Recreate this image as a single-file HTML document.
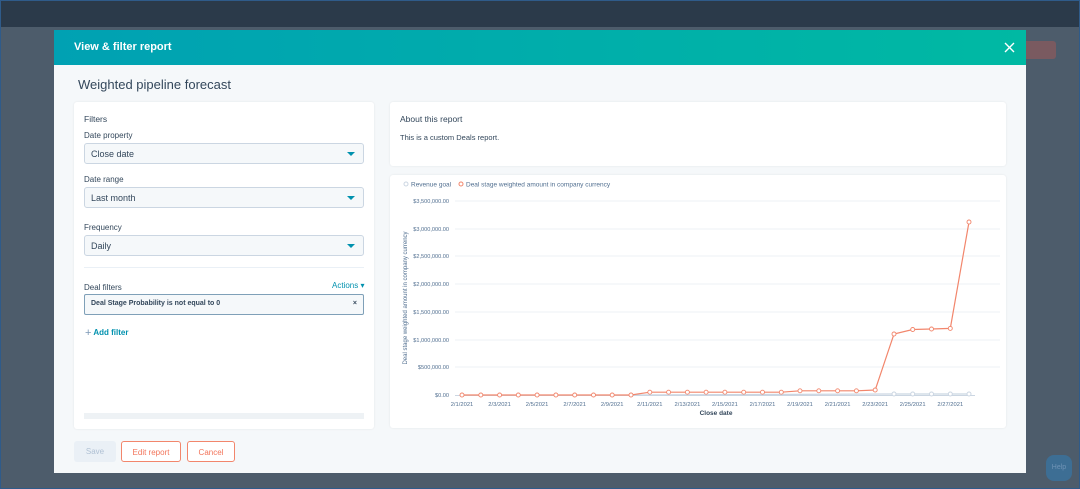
<!DOCTYPE html>
<html><head><meta charset="utf-8"><style>
*{box-sizing:border-box;margin:0;padding:0}
body{width:1080px;height:489px;overflow:hidden;background:#4d5c6b;font-family:"Liberation Sans",sans-serif;position:relative}
.nav{position:absolute;left:0;top:0;width:1080px;height:27px;background:#2b3a4a}
.a{position:absolute}
.modal{left:54px;top:30px;width:972px;height:443px;background:#f5f8fa}
.hdr{left:54px;top:30px;width:972px;height:35px;background:linear-gradient(90deg,#00a1b3,#00b9a3)}
.card{background:#fff;border-radius:3px;box-shadow:0 0 2px rgba(0,0,0,.08)}
.lbl{font-size:8px;color:#33475b}
.dd{position:absolute;left:84px;width:280px;height:21px;background:#f5f8fa;border:1px solid #cbd6e2;border-radius:3px;font-size:9px;color:#33475b;padding:5px 0 0 6px}
.dd:after{content:"";position:absolute;right:8px;top:8px;border:4px solid transparent;border-top:4px solid #0091ae;border-bottom:0}
.btn{position:absolute;top:441px;height:21px;border-radius:3px;font-size:8px;text-align:center;padding-top:6px}
</style></head><body>
<div class="a" style="left:0;top:0;width:1080px;height:489px;border:1px solid #2f5b8a;z-index:5"></div>
<div class="a nav"></div>
<div class="a" style="left:990px;top:41px;width:66px;height:18px;background:#7a5a60;border-radius:3px"></div>
<div class="a" style="left:1046px;top:455px;width:26px;height:26px;background:#3d6e94;border-radius:8px;color:#6f93b5;font-size:7px;text-align:center;padding-top:9px">Help</div>
<div class="a modal"></div>
<div class="a hdr"></div>
<div class="a" style="left:74px;top:41px;color:#fff;font-size:11px;font-weight:bold">View &amp; filter report</div>
<svg class="a" style="left:1004px;top:42px" width="11" height="11"><path d="M1 1L10 10M10 1L1 10" stroke="#fff" stroke-width="1.4"/></svg>
<div class="a" style="left:78px;top:77px;color:#33475b;font-size:13px">Weighted pipeline forecast</div>

<div class="a card" style="left:74px;top:102px;width:300px;height:327px"></div>
<div class="a lbl" style="left:84px;top:114px;font-size:8.5px">Filters</div>
<div class="a lbl" style="left:84px;top:131px">Date property</div>
<div class="dd" style="top:143px">Close date</div>
<div class="a lbl" style="left:84px;top:175px">Date range</div>
<div class="dd" style="top:187px">Last month</div>
<div class="a lbl" style="left:84px;top:223px">Frequency</div>
<div class="dd" style="top:235px">Daily</div>
<div class="a" style="left:84px;top:267px;width:280px;height:1px;background:#eaf0f6"></div>
<div class="a lbl" style="left:84px;top:283px">Deal filters</div>
<div class="a" style="left:332px;top:281px;font-size:8px;color:#0091ae">Actions ▾</div>
<div class="a" style="left:84px;top:294px;width:280px;height:21px;background:#f5f8fa;border:1px solid #7fa0b8;border-radius:2px;font-size:7px;font-weight:bold;color:#33475b;padding:5px 0 0 6px">Deal Stage Probability is not equal to 0<span style="position:absolute;right:6px;top:5px">×</span></div>
<div class="a" style="left:85px;top:327px;font-size:8px;color:#0091ae;font-weight:bold"><span style="color:#7c98b6;font-weight:normal;font-size:11px;vertical-align:-1px">+</span> Add filter</div>
<div class="a" style="left:84px;top:413px;width:280px;height:6px;background:#eef2f5"></div>

<div class="a card" style="left:390px;top:102px;width:616px;height:64px"></div>
<div class="a lbl" style="left:400px;top:114px;font-size:8.5px">About this report</div>
<div class="a" style="left:400px;top:133px;font-size:7.5px;color:#33475b">This is a custom Deals report.</div>

<div class="a card" style="left:390px;top:175px;width:616px;height:253px"></div>
<svg class="a" style="left:0;top:0" width="1080" height="489" font-family="Liberation Sans, sans-serif">
<g font-size="6.5" fill="#516f90">
<circle cx="406" cy="184" r="2" fill="none" stroke="#cbd6e2"/><text x="411" y="186.5">Revenue goal</text>
<circle cx="461" cy="184" r="2" fill="none" stroke="#f2866c"/><text x="466" y="186.5">Deal stage weighted amount in company currency</text>
</g>
<g stroke="#eef2f6" stroke-width="1">
<line x1="455" x2="1000" y1="201" y2="201"/><line x1="455" x2="1000" y1="229" y2="229"/><line x1="455" x2="1000" y1="256" y2="256"/><line x1="455" x2="1000" y1="284" y2="284"/><line x1="455" x2="1000" y1="312" y2="312"/><line x1="455" x2="1000" y1="340" y2="340"/><line x1="455" x2="1000" y1="367" y2="367"/>
</g>
<line x1="455" x2="975" y1="395.5" y2="395.5" stroke="#cbd6e2"/>
<g font-size="5.6" fill="#516f90" text-anchor="end">
<text x="449" y="203">$3,500,000.00</text><text x="449" y="231">$3,000,000.00</text><text x="449" y="258">$2,500,000.00</text><text x="449" y="286">$2,000,000.00</text><text x="449" y="314">$1,500,000.00</text><text x="449" y="342">$1,000,000.00</text><text x="449" y="369">$500,000.00</text><text x="449" y="397">$0.00</text>
</g>
<text transform="translate(407,298) rotate(-90)" font-size="6" fill="#516f90" text-anchor="middle">Deal stage weighted amount in company currency</text>
<g font-size="5.8" fill="#516f90" text-anchor="middle">
<text x="462" y="406">2/1/2021</text><text x="499.6" y="406">2/3/2021</text><text x="537.1" y="406">2/5/2021</text><text x="574.7" y="406">2/7/2021</text><text x="612.2" y="406">2/9/2021</text><text x="649.8" y="406">2/11/2021</text><text x="687.4" y="406">2/13/2021</text><text x="724.9" y="406">2/15/2021</text><text x="762.5" y="406">2/17/2021</text><text x="800" y="406">2/19/2021</text><text x="837.6" y="406">2/21/2021</text><text x="875.2" y="406">2/23/2021</text><text x="912.7" y="406">2/25/2021</text><text x="950.3" y="406">2/27/2021</text>
</g>
<text x="716" y="415" font-size="6.5" font-weight="bold" fill="#33475b" text-anchor="middle">Close date</text>
<polyline fill="none" stroke="#cbd6e2" stroke-width="1.2" points="631,395 894,394 969,394"/>
<g fill="#fff" stroke="#cbd6e2"><circle cx="894" cy="394" r="2"/><circle cx="912.7" cy="394" r="2"/><circle cx="931.5" cy="394" r="2"/><circle cx="950.3" cy="394" r="2"/><circle cx="969" cy="394" r="2"/></g>
<polyline fill="none" stroke="#f2866c" stroke-width="1.2" points="462,395 480.8,395 499.6,395 518.3,395 537.1,395 555.9,395 574.7,395 593.5,395 612.2,395 631,395 649.8,392.2 668.6,392.2 687.4,392.2 706.1,392.2 724.9,392.2 743.7,392.2 762.5,392.2 781.3,392.2 800,390.8 818.8,390.8 837.6,390.8 856.4,390.8 875.2,390 894,334 912.7,329.5 931.5,329 950.3,328.4 969,222"/>
<g fill="#fff" stroke="#f2866c" stroke-width="0.9">
<circle cx="462" cy="395" r="2"/><circle cx="480.8" cy="395" r="2"/><circle cx="499.6" cy="395" r="2"/><circle cx="518.3" cy="395" r="2"/><circle cx="537.1" cy="395" r="2"/><circle cx="555.9" cy="395" r="2"/><circle cx="574.7" cy="395" r="2"/><circle cx="593.5" cy="395" r="2"/><circle cx="612.2" cy="395" r="2"/><circle cx="631" cy="395" r="2"/><circle cx="649.8" cy="392.2" r="2"/><circle cx="668.6" cy="392.2" r="2"/><circle cx="687.4" cy="392.2" r="2"/><circle cx="706.1" cy="392.2" r="2"/><circle cx="724.9" cy="392.2" r="2"/><circle cx="743.7" cy="392.2" r="2"/><circle cx="762.5" cy="392.2" r="2"/><circle cx="781.3" cy="392.2" r="2"/><circle cx="800" cy="390.8" r="2"/><circle cx="818.8" cy="390.8" r="2"/><circle cx="837.6" cy="390.8" r="2"/><circle cx="856.4" cy="390.8" r="2"/><circle cx="875.2" cy="390" r="2"/><circle cx="894" cy="334" r="2"/><circle cx="912.7" cy="329.5" r="2"/><circle cx="931.5" cy="329" r="2"/><circle cx="950.3" cy="328.4" r="2"/><circle cx="969" cy="222" r="2"/>
</g>
</svg>

<div class="btn" style="left:74px;width:42px;background:#eaf0f6;color:#b0c1d4">Save</div>
<div class="btn" style="left:121px;width:60px;background:#fff;border:1px solid #f2866c;color:#f2745a">Edit report</div>
<div class="btn" style="left:187px;width:48px;background:#fff;border:1px solid #f2866c;color:#f2745a">Cancel</div>
</body></html>
